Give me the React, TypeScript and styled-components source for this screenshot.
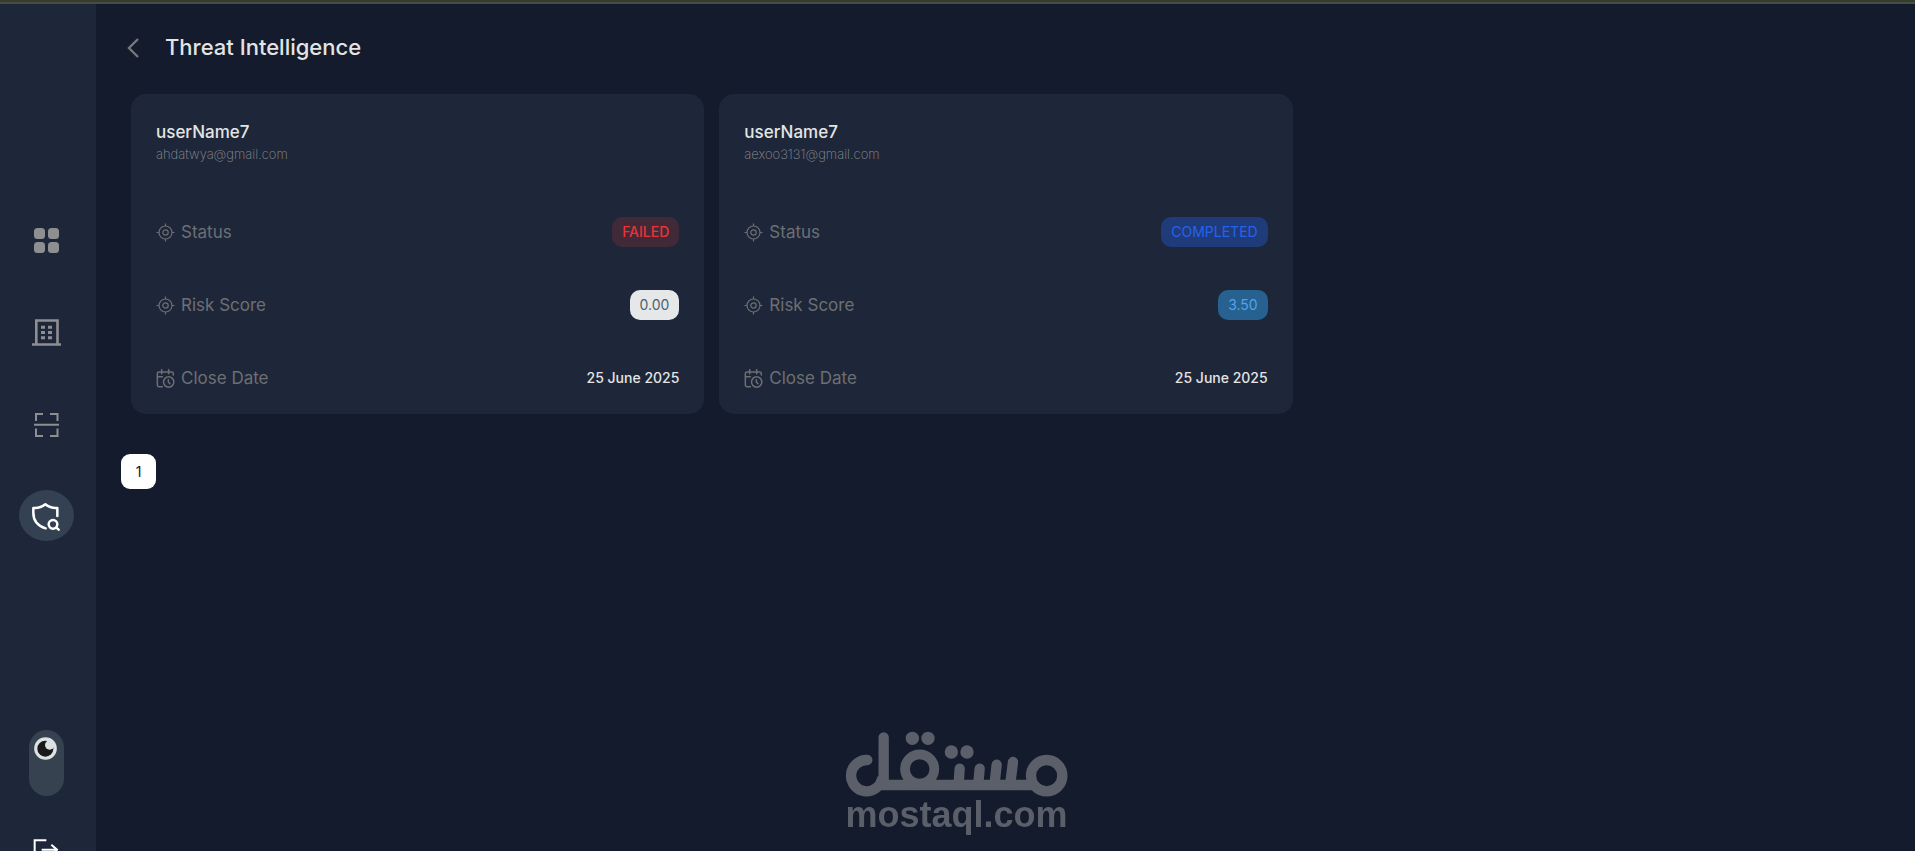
import React from "react";
import styled, { createGlobalStyle } from "styled-components";

const GlobalStyle = createGlobalStyle`
  *, *::before, *::after { box-sizing: border-box; }
  body {
    margin: 0;
    background: #141b2c;
    color: #e4e4e4;
    font-family: Inter, "Liberation Sans", sans-serif;
  }
  button { font: inherit; border: 0; padding: 0; cursor: pointer; }
  h1, h2, p, dl, dd { margin: 0; }
`;

const Page = styled.div`
  display: flex;
  flex-direction: column;
  height: 100vh;
  overflow: hidden;
`;

const TopStrip = styled.div`
  flex: none;
  height: 4px;
  background: #353e2e;
  border-bottom: 2px solid #4a4b44;
`;

const Shell = styled.div`
  display: flex;
  flex: 1;
  min-height: 0;
`;

const Sidebar = styled.aside`
  flex: none;
  display: flex;
  flex-direction: column;
  align-items: center;
  width: 96px;
  padding: 210px 3px 0 0;
  overflow: hidden;
  background: #1e2739;
`;

const Nav = styled.nav`
  display: flex;
  flex-direction: column;
  gap: 41px;
`;

const NavLink = styled.a<{ $active?: boolean }>`
  display: flex;
  align-items: center;
  justify-content: center;
  width: 55px;
  height: 51px;
  padding: 2px 1px 0 0;
  border-radius: 50%;
  color: ${(p) => (p.$active ? "#ffffff" : "#8f8f91")};
  background: ${(p) => (p.$active ? "#344152" : "transparent")};
`;

const ThemeSwitch = styled.label`
  flex: none;
  display: flex;
  justify-content: center;
  align-items: flex-start;
  width: 35px;
  height: 66px;
  margin: 189px 0 43px;
  padding: 7px 2px 0 0;
  border-radius: 18px;
  background: #364250;
  cursor: pointer;

  &:has(input:checked) { align-items: flex-end; padding-bottom: 7px; }
`;

const SwitchInput = styled.input`
  position: absolute;
  width: 1px;
  height: 1px;
  margin: 0;
  opacity: 0;
`;

const LogoutButton = styled.button`
  flex: none;
  height: 27px;
  color: #ffffff;
  background: none;
`;

const Icon = styled.svg`
  display: block;
  flex: none;
  fill: none;
  stroke: currentColor;
`;

const Main = styled.main`
  flex: 1;
  min-width: 0;
  padding: 26px 34px 0 25px;
`;

const Header = styled.header`
  display: flex;
  align-items: flex-start;
  gap: 21px;
  height: 36px;
`;

const BackButton = styled.button`
  display: flex;
  justify-content: center;
  align-items: center;
  width: 23px;
  height: 36px;
  color: #77787e;
  background: none;
`;

const Title = styled.h1`
  font-size: 22px;
  line-height: 34px;
  font-weight: 500;
`;

const CardGrid = styled.section`
  display: grid;
  grid-template-columns: repeat(3, 1fr);
  gap: 15px;
  margin: 28px 0 40px 10px;
`;

const Card = styled.article`
  display: flex;
  flex-direction: column;
  padding: 26px 25px 21px;
  border-radius: 15px;
  background: #1e2739;
`;

const UserName = styled.h2`
  font-size: 17px;
  line-height: 24px;
  font-weight: 500;
`;

const Email = styled.p`
  font-size: 13px;
  line-height: 20px;
  font-weight: 200;
  color: #8d8f93;
`;

const Details = styled.dl`
  display: flex;
  flex-direction: column;
  gap: 43px;
  margin-top: 53px;
`;

const Row = styled.div`
  display: flex;
  align-items: center;
  justify-content: space-between;
  height: 30px;
`;

const Label = styled.dt`
  display: flex;
  align-items: center;
  gap: 6px;
  font-size: 17px;
  line-height: 24px;
  font-weight: 400;
  color: #6d6f74;
`;

const tones = {
  failed: { bg: "#402a38", fg: "#ed3237", weight: 500 },
  completed: { bg: "#203b7a", fg: "#2563eb", weight: 400 },
  none: { bg: "#e5e7e9", fg: "#4b626c", weight: 400 },
  low: { bg: "#26618f", fg: "#51a2f0", weight: 400 },
};

const Badge = styled.dd<{ $tone: keyof typeof tones }>`
  padding: 0 10px;
  border-radius: 10px;
  font-size: 14px;
  line-height: 30px;
  font-weight: ${(p) => tones[p.$tone].weight};
  color: ${(p) => tones[p.$tone].fg};
  background: ${(p) => tones[p.$tone].bg};
`;

const DateValue = styled.dd`
  font-size: 14px;
  line-height: 24px;
  font-weight: 500;
`;

const PageButton = styled.button`
  width: 35px;
  height: 35px;
  border-radius: 9px;
  font-size: 14px;
  color: #15181f;
  background: #ffffff;
`;

const Watermark = styled.div`
  position: fixed;
  left: 0;
  right: 0;
  bottom: 20px;
  display: flex;
  flex-direction: column;
  align-items: center;
  padding-right: 2px;
  color: #5b5f6a;
  font: bold 36px/33px "Liberation Sans", sans-serif;
  pointer-events: none;
`;

const TargetIcon = () => (
  <Icon width="19" height="19" viewBox="0 0 19 19" strokeWidth="1.2" aria-hidden>
    <circle cx="9.5" cy="9.5" r="6.5" />
    <circle cx="9.5" cy="9.5" r="2.7" />
    <path d="M9.5 .5V3M9.5 16v2.5M.5 9.5H3M16 9.5h2.5" />
  </Icon>
);

const CalendarClockIcon = () => (
  <Icon width="19" height="19" viewBox="0 0 57 57" strokeWidth="4.5" strokeLinecap="round" strokeLinejoin="round" aria-hidden>
    <path d="M19 53H9Q4 53 4 48V14Q4 9 9 9H47Q52 9 52 14V18M4 23H19M17 2V14M38 2V14" />
    <circle cx="38" cy="39" r="15.5" />
    <path d="M37 32V39L42 44" />
  </Icon>
);

const MoonIcon = () => (
  <svg width="23" height="23" viewBox="0 0 69 69" aria-hidden>
    <circle cx="34.5" cy="34.5" r="34" fill="#dbe2e1" />
    <circle cx="34" cy="35" r="24" fill="#191919" />
    <circle cx="47" cy="24" r="14" fill="#dbe2e1" />
  </svg>
);

const GridIcon = () => (
  <Icon width="25" height="25" viewBox="0 0 25 25" aria-hidden>
    <g fill="currentColor" stroke="none">
      <rect width="11" height="11" rx="3.5" />
      <rect x="14" width="11" height="11" rx="3.5" />
      <rect y="14" width="11" height="11" rx="3.5" />
      <rect x="14" y="14" width="11" height="11" rx="3.5" />
    </g>
  </Icon>
);

const BuildingIcon = () => (
  <Icon width="29" height="27" viewBox="0 0 29 27" aria-hidden>
    <path d="M4.3 25V1.5H25.5V25M0 25.5H29" strokeWidth="2.6" />
    <path d="M9 8.2h4M16 8.2h4M9 13.5h4M16 13.5h4M9 18.8h4M16 18.8h4" strokeWidth="3" />
  </Icon>
);

const ScanIcon = () => (
  <Icon width="25" height="24" viewBox="0 0 25 24" strokeWidth="2" aria-hidden>
    <path d="M2 8V1H9M16 1H23.5V8M2 15.5V23H9M16 23H23.5V15.5M0 11.7H25" />
  </Icon>
);

const ShieldSearchIcon = () => (
  <Icon width="30" height="30" viewBox="94 364 90 90" strokeWidth="7.5" strokeLinecap="round" strokeLinejoin="round" aria-hidden>
    <path d="M173 406V382Q153 384 137 371Q121 384 101 382V396C101 423 119 437 138 443" />
    <circle cx="160" cy="431" r="13" />
    <path d="M170 441L177 447" />
  </Icon>
);

const LogoutIcon = () => (
  <Icon width="27" height="27" viewBox="98 419 81 81" strokeWidth="6" aria-hidden>
    <path d="M138 423H103V495H138M124 451H172M153 436L170 451L153 471" />
  </Icon>
);

const MostaqlMark = () => (
  <Icon width="224" height="67" viewBox="45 34 672 201" strokeWidth="31" strokeLinecap="round" aria-hidden>
    <path d="M112 121A47 47 0 1 0 156 178M161 53V190M160 196H610" />
    <circle cx="650" cy="168" r="47" />
    <circle cx="269" cy="148" r="44" strokeWidth="29" />
    <path d="M389 147L386 190M449 147L445 190M500 135L494 190M549 127L541 190" />
    <g fill="currentColor" stroke="none">
      <circle cx="247" cy="56" r="20" />
      <circle cx="294" cy="56" r="20" />
      <circle cx="364" cy="97" r="20" />
      <circle cx="411" cy="97" r="20" />
    </g>
  </Icon>
);

type Report = {
  name: string;
  email: string;
  status: string;
  statusTone: keyof typeof tones;
  score: string;
  scoreTone: keyof typeof tones;
  date: string;
};

const reports: Report[] = [
  { name: "userName7", email: "ahdatwya@gmail.com", status: "FAILED", statusTone: "failed", score: "0.00", scoreTone: "none", date: "25 June 2025" },
  { name: "userName7", email: "aexoo3131@gmail.com", status: "COMPLETED", statusTone: "completed", score: "3.50", scoreTone: "low", date: "25 June 2025" },
];

const navItems = [
  { label: "Dashboard", icon: <GridIcon /> },
  { label: "Organizations", icon: <BuildingIcon /> },
  { label: "Scans", icon: <ScanIcon /> },
  { label: "Threat Intelligence", icon: <ShieldSearchIcon />, active: true },
];

const ReportCard = ({ report }: { report: Report }) => (
  <Card>
    <UserName>{report.name}</UserName>
    <Email>{report.email}</Email>
    <Details>
      <Row>
        <Label><TargetIcon />Status</Label>
        <Badge $tone={report.statusTone}>{report.status}</Badge>
      </Row>
      <Row>
        <Label><TargetIcon />Risk Score</Label>
        <Badge $tone={report.scoreTone}>{report.score}</Badge>
      </Row>
      <Row>
        <Label><CalendarClockIcon />Close Date</Label>
        <DateValue>{report.date}</DateValue>
      </Row>
    </Details>
  </Card>
);

export default function App() {
  return (
    <Page>
      <GlobalStyle />
      <TopStrip />
      <Shell>
        <Sidebar>
          <Nav>
            {navItems.map((item) => (
              <NavLink key={item.label} href="#" aria-label={item.label} $active={item.active}>
                {item.icon}
              </NavLink>
            ))}
          </Nav>
          <ThemeSwitch>
            <SwitchInput type="checkbox" role="switch" aria-label="Light theme" />
            <MoonIcon />
          </ThemeSwitch>
          <LogoutButton aria-label="Log out"><LogoutIcon /></LogoutButton>
        </Sidebar>
        <Main>
          <Header>
            <BackButton aria-label="Back">
              <Icon width="12" height="20" viewBox="0 0 12 20" strokeWidth="2.4" aria-hidden>
                <path d="M11 1L2 10L11 19" />
              </Icon>
            </BackButton>
            <Title>Threat Intelligence</Title>
          </Header>
          <CardGrid>
            {reports.map((report) => (
              <ReportCard key={report.email} report={report} />
            ))}
          </CardGrid>
          <PageButton aria-current="page">1</PageButton>
        </Main>
      </Shell>
      <Watermark>
        <MostaqlMark />
        mostaql.com
      </Watermark>
    </Page>
  );
}
